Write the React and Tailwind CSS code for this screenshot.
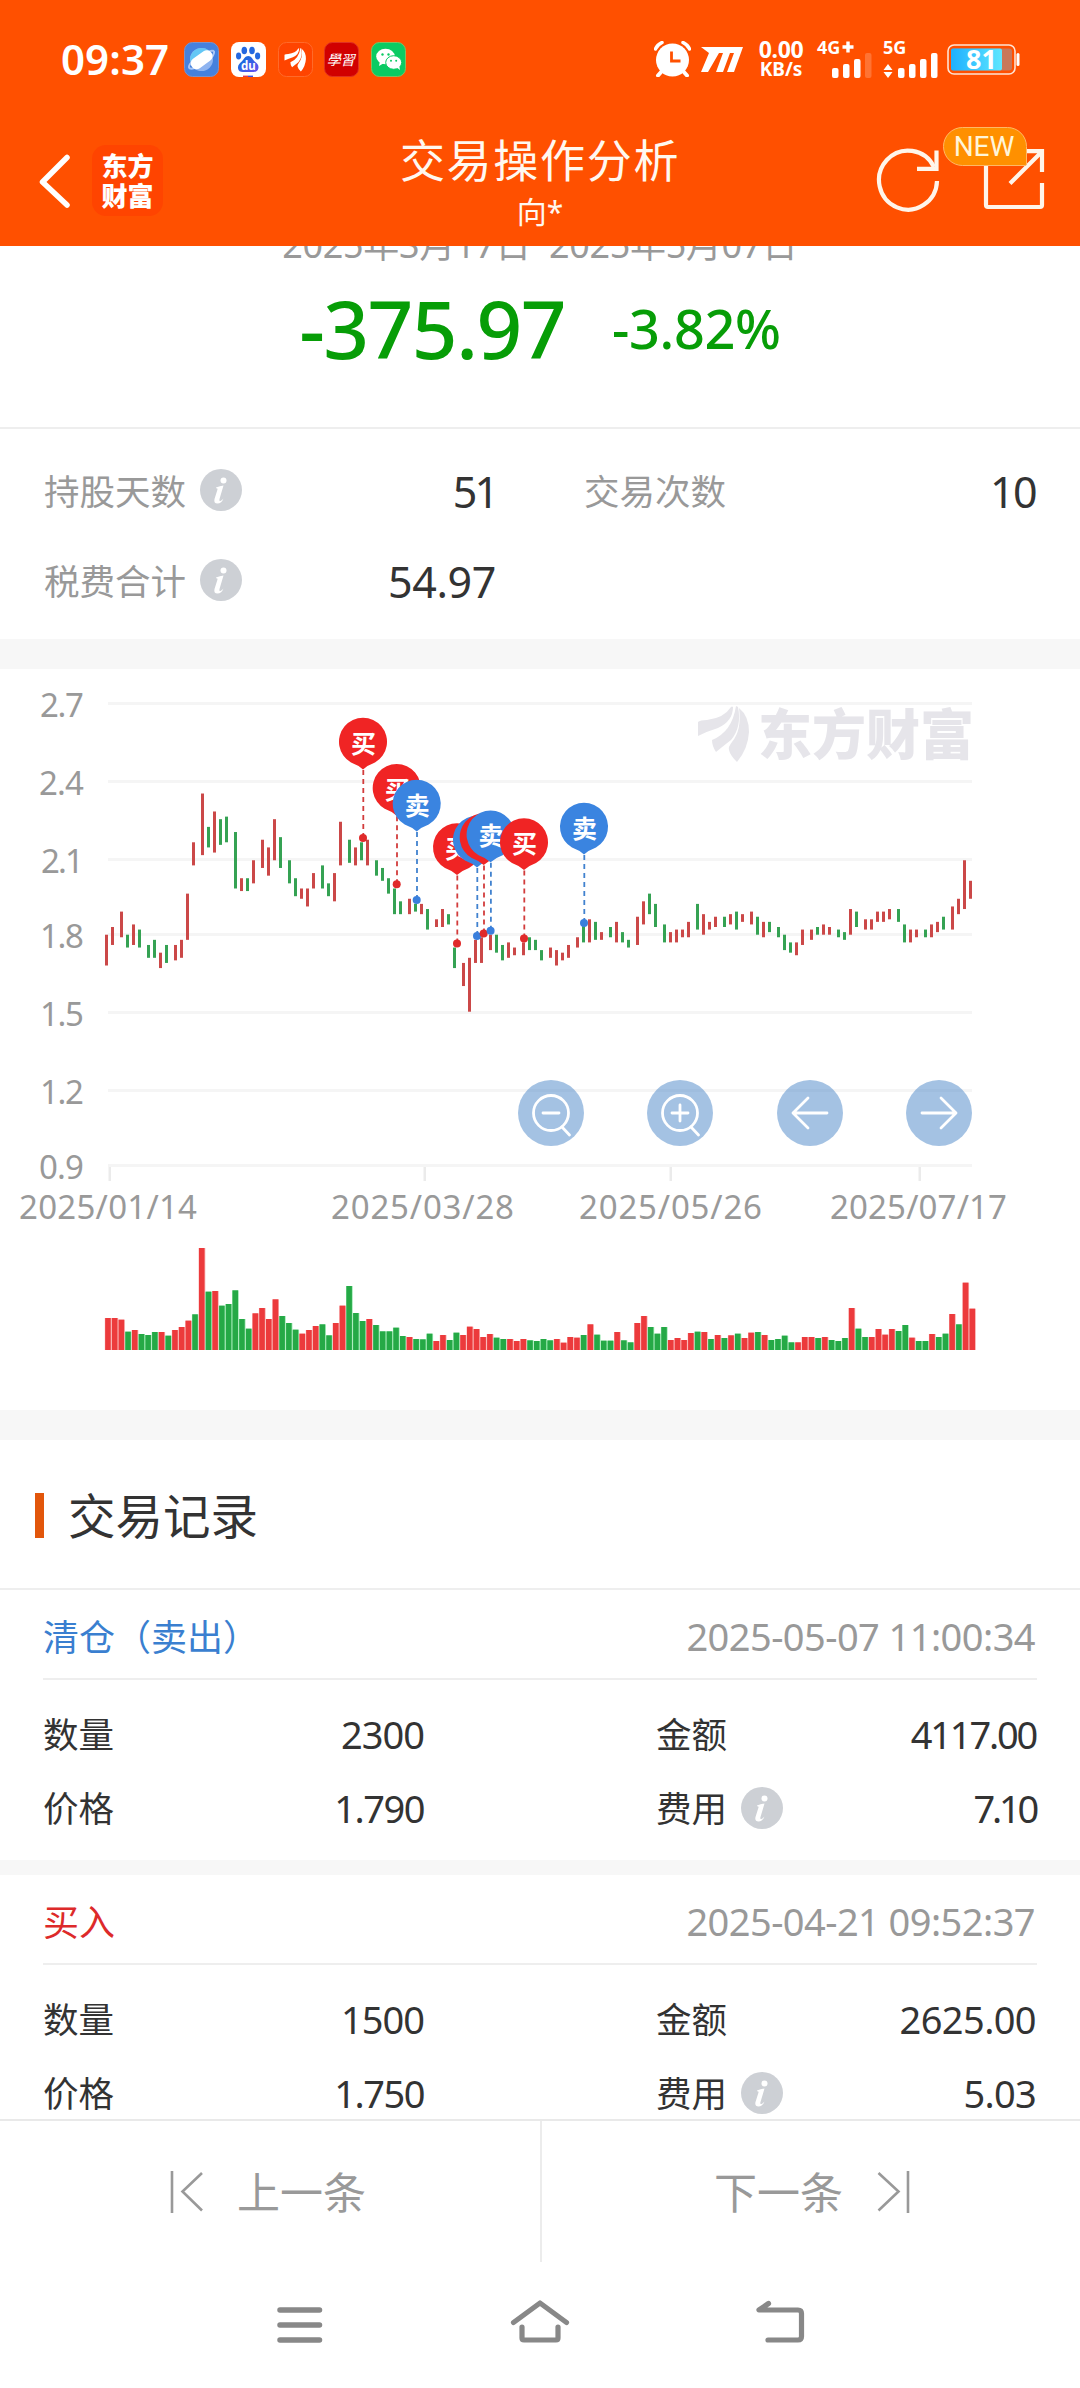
import React from 'react';

// [high, low, up] in cents, one entry per trading day
const candles = [
  [180, 168, 1], [183, 176, 1], [189, 179, 1], [180, 175, 0], [184, 176, 1], [182, 175, 0], [176, 171, 0], [178, 171, 0],
  [173, 167, 1], [176, 169, 0], [176, 170, 1], [178, 171, 1], [196, 178, 1], [216, 207, 1], [235, 211, 1], [222, 214, 0],
  [228, 212, 1], [225, 215, 0], [226, 216, 0], [220, 198, 0], [202, 197, 1], [202, 197, 0], [209, 200, 1], [217, 206, 1],
  [214, 203, 1], [225, 209, 1], [218, 206, 0], [209, 200, 0], [202, 195, 0], [198, 194, 1], [198, 191, 1], [204, 198, 1],
  [207, 198, 0], [200, 195, 0], [204, 193, 1], [224, 207, 1], [217, 208, 0], [214, 207, 1], [216, 209, 0], [217, 207, 1],
  [209, 203, 0], [206, 201, 0], [202, 196, 0], [198, 188, 0], [193, 188, 0], [194, 188, 1], [192, 189, 0], [192, 188, 1],
  [190, 182, 0], [186, 183, 1], [190, 183, 1], [188, 184, 0], [175, 167, 0], [169, 160, 1], [171, 150, 1], [178, 169, 1],
  [179, 169, 1], [180, 174, 1], [180, 173, 0], [176, 170, 0], [177, 171, 1], [175, 172, 1], [177, 172, 1], [179, 174, 0],
  [178, 174, 0], [174, 170, 0], [175, 171, 1], [174, 168, 1], [173, 170, 1], [176, 171, 1], [179, 175, 1], [184, 177, 0],
  [186, 177, 1], [185, 178, 0], [181, 178, 1], [183, 179, 0], [185, 177, 1], [181, 177, 0], [178, 175, 0], [187, 176, 1],
  [193, 184, 1], [196, 188, 0], [192, 183, 0], [184, 177, 0], [181, 177, 1], [182, 177, 1], [182, 179, 1], [185, 179, 1],
  [192, 182, 0], [188, 180, 1], [185, 182, 1], [187, 183, 1], [187, 183, 0], [188, 184, 1], [189, 182, 0], [188, 185, 1],
  [189, 184, 1], [187, 180, 0], [185, 179, 1], [185, 181, 0], [183, 179, 0], [180, 174, 0], [177, 173, 0], [177, 172, 1],
  [182, 176, 1], [182, 178, 1], [183, 180, 0], [184, 180, 1], [183, 180, 1], [182, 179, 0], [181, 178, 0], [190, 180, 1],
  [189, 183, 0], [186, 182, 1], [186, 182, 1], [189, 185, 1], [189, 185, 1], [190, 186, 1], [190, 185, 0], [184, 177, 0],
  [182, 177, 1], [182, 179, 1], [182, 179, 0], [184, 179, 1], [185, 181, 1], [187, 182, 0], [191, 182, 1], [194, 188, 1],
  [209, 190, 1], [201, 194, 1],
];

// bar heights, negative = down day
const volumes = [
  96, 96, 91, -55, 60, -48, -45, -54, 54, -43, 60, 69, 88, -107, 306, -175, 177, -133, -138, -179, -93, -64, 110, 126, 93, 152,
  -102, -81, -61, 49, 60, 72, -77, -44, 81, 133, -192, -111, -87, 93, -75, -56, -56, -67, -42, 39, -33, -32, -49, 27, 45, -30,
  -52, 45, 70, 63, 39, 48, -37, -33, 33, 27, 33, -29, -27, -33, -29, 33, 22, 39, 37, -45, 77, -46, -28, -28, 54, -29, -23, 81,
  102, -69, -49, -69, 30, 36, 30, 51, -55, 54, -33, 45, -36, 44, -49, 36, 52, -54, 45, -30, -33, -43, -23, 23, 39, 39, -36, 39,
  -30, -27, -36, 126, -64, -39, 39, 63, 46, 63, -57, -75, 37, -27, -27, 48, -39, -49, 108, -77, 202, 124,
];

const trades = [
  { x: 363, y: 838, side: '买' },
  { x: 396.7, y: 884.3, side: '买' },
  { x: 416.7, y: 900, side: '卖' },
  { x: 457, y: 943.5, side: '买' },
  { x: 477, y: 936, side: '卖' },
  { x: 483.7, y: 933.5, side: '买' },
  { x: 490.6, y: 930.7, side: '卖' },
  { x: 524, y: 938.5, side: '买' },
  { x: 584, y: 923, side: '卖' },
];

const priceLabels = [
  ['2.7', 703.5, 43], ['2.4', 781.5, 44], ['2.1', 859.5, 42], ['1.8', 934.5, 43],
  ['1.5', 1012.5, 43], ['1.2', 1090.5, 43], ['0.9', 1165.5, 44],
];

const dateLabels = [
  ['2025/01/14', 109.5, 20, 176],
  ['2025/03/28', 424.5, 332, 181],
  ['2025/05/26', 670.5, 580, 181],
  ['2025/07/17', 919.5, 831, 175],
];

const records = [
  { type: '清仓（卖出）', color: 'text-[#3a7fd0]', time: '2025-05-07 11:00:34', count: '2300', amount: '4117.00', amountClass: 'tracking-[-2.2px]', price: '1.790', fee: '7.10', feeClass: 'tracking-[-3.2px]' },
  { type: '买入', color: 'text-[#dd2a2a]', time: '2025-04-21 09:52:37', count: '1500', amount: '2625.00', amountClass: 'tracking-[-0.6px]', price: '1.750', fee: '5.03', feeClass: 'tracking-[-0.7px]' },
];

const AppIcons = () => (
  <div className="flex gap-[11.8px]">
    <svg className="w-[35px] h-[35px]" viewBox="0 0 35 35">
      <rect x=".5" y=".5" width="34" height="34" rx="8" fill="#4581dd" stroke="#7b93c9" />
      <circle cx="17.5" cy="17.5" r="11.5" fill="#8fb4f0" />
      <path d="M6 17.5A11.5 11.5 0 0 1 27 11L8 23Z" fill="#64c7f5" />
      <path d="M5 26q-1-3 5-8M30 9q-3-1-6 1M30 9q1 4-6 10M5 26q4 2 9-2" stroke="#a8c6f5" strokeWidth="2" fill="none" />
      <rect x="5.5" y="12" width="24" height="11.5" rx="5.5" fill="#fff" transform="rotate(-36 17.5 17.5)" />
    </svg>
    <svg className="w-[35px] h-[35px]" viewBox="0 0 35 35">
      <defs>
        <linearGradient id="paw" x1="0" y1="0" x2="1" y2="1">
          <stop offset=".3" stopColor="#1f69e0" />
          <stop offset="1" stopColor="#6b4df0" />
        </linearGradient>
      </defs>
      <rect width="35" height="35" rx="8" fill="#fff" />
      <g fill="#2468e0">
        <ellipse cx="13.3" cy="8.5" rx="2.8" ry="3.8" />
        <ellipse cx="21" cy="8.5" rx="2.8" ry="3.8" />
        <ellipse cx="7.6" cy="14" rx="2.6" ry="3.4" />
        <ellipse cx="26.6" cy="14" rx="2.6" ry="3.4" />
      </g>
      <path d="M17.2 14c3.3 0 4 3 6.2 5.2 2.3 2.2 4.6 3.3 4 7-.5 3-2.8 3.8-5.2 3.7H12c-2.7 0-4.7-.9-5-3.7-.4-3.5 2-5 4-7 2.2-2.2 3-5.2 6.2-5.2Z" fill="url(#paw)" />
      <text x="17.3" y="28" fontSize="11.5" fontWeight="700" fill="#fff" textAnchor="middle" className="font-['Noto_Sans',sans-serif]">du</text>
      <rect x="12" y="33.6" width="5" height="1.4" fill="#e23a4a" />
      <rect x="17" y="33.6" width="5" height="1.4" fill="#3a50e0" />
    </svg>
    <svg className="w-[35px] h-[35px]" viewBox="0 0 35 35">
      <rect x=".5" y=".5" width="34" height="34" rx="8" fill="#ff4400" stroke="#ff6a2a" />
      <g transform="translate(6.5 6) scale(.42)" fill="#fff">
        <EastPath />
      </g>
    </svg>
    <svg className="w-[35px] h-[35px]" viewBox="0 0 35 35">
      <rect x=".5" y=".5" width="34" height="34" rx="8" fill="#d10000" stroke="#e03020" />
      <text x="17.5" y="23" fontSize="14" fill="#fff" textAnchor="middle" transform="skewX(-14) translate(5 0)" className="font-['Noto_Sans_CJK_TC',sans-serif]">學習</text>
    </svg>
    <svg className="w-[35px] h-[35px]" viewBox="0 0 35 35">
      <rect x=".5" y=".5" width="34" height="34" rx="8" fill="#0acb63" stroke="#7fc060" />
      <ellipse cx="14.5" cy="14.5" rx="9.3" ry="7.8" fill="#fff" />
      <path d="M9 19l-1 5 5-3z" fill="#fff" />
      <ellipse cx="22.7" cy="20.5" rx="8" ry="6.8" fill="#fff" stroke="#0acb63" strokeWidth="1" />
      <path d="M25 25l4 3-1-5z" fill="#fff" />
      <g fill="#0acb63">
        <circle cx="11.5" cy="12.5" r="1.2" />
        <circle cx="17.5" cy="12.5" r="1.2" />
        <circle cx="20" cy="18.7" r="1" />
        <circle cx="25.2" cy="18.7" r="1" />
      </g>
    </svg>
  </div>
);

// three feathers of the brand mark, 51x56
const EastPath = () => (
  <>
    <path d="M0 30V16q2-2 9-2Q26 12 33 1q1-1 2 0 0 14-15 21Q10 25 0 30Z" />
    <path d="M14 34Q34 26 38 0l2 1q4 20-7 33-9 7-15 12-4-6-4-12Z" />
    <path d="M31 44q-1-3 3-8Q44 24 41 2q10 8 10 24-1 17-12 30-7-7-8-12Z" />
  </>
);

const SignalBars = ({ weak }) => (
  <svg className="w-[41px] h-[26px]" viewBox="0 0 41 26" fill="#fff">
    <rect x="0" y="16" width="6.5" height="10" rx="2" />
    <rect x="11" y="12" width="6.5" height="14" rx="2" />
    <rect x="22" y="7" width="6.5" height="19" rx="2" />
    <rect x="33" y="1" width="6.5" height="25" rx="2" opacity={weak ? 0.2 : 1} />
  </svg>
);

const StatusBar = () => (
  <div className="h-[118px] pl-[61px] pr-[60px] flex items-center justify-between text-white">
    <div className="flex items-center gap-[14px]">
      <span className="w-[109px] text-[42px] font-semibold leading-none whitespace-nowrap tracking-[0.1px]">09:37</span>
      <AppIcons />
    </div>
    <div className="flex items-center">
      <svg className="w-[37px] h-[36px]" viewBox="0 0 37 36">
        <path d="M1.5 8Q3 4 8 1.500M35.5 8Q34 4 29 1.500" stroke="#fff" strokeWidth="3.5" fill="none" strokeLinecap="round" />
        <path d="M8 30l-4 4.500M29 30l4 4.500" stroke="#fff" strokeWidth="4" strokeLinecap="round" />
        <circle cx="18.5" cy="19" r="16.5" fill="#fff" />
        <path d="M17.5 10.500v9.500h9" stroke="#ff5000" strokeWidth="2.8" fill="none" />
      </svg>
      <svg className="w-[42px] h-[25px] ml-[10px]" viewBox="0 0 42 25" fill="#fff">
        <path d="M0 0h42l-9 25h-7l7-19h-4l-7 19h-7l7-19h-4L7 25H0L8 6Z" />
      </svg>
      <div className="ml-[13px] mt-[-3px] w-[50px] flex flex-col items-center font-bold leading-none">
        <span className="text-[23px] h-[21px] leading-[20px] tracking-[-0.4px]">0.00</span>
        <span className="text-[19px] h-[17px] leading-[18px]">KB/s</span>
      </div>
      <div className="relative ml-[11px] w-[56px] h-[37px] flex items-end justify-end">
        <span className="absolute left-0 top-[-3px] text-[18px] font-bold leading-none whitespace-nowrap">4G</span>
        <svg className="absolute left-[25px] top-0 w-[12px] h-[12px]" viewBox="0 0 12 12">
          <path d="M6 0.500v11M0.500 6h11" stroke="#fff" strokeWidth="3.4" />
        </svg>
        <SignalBars weak />
      </div>
      <div className="relative ml-[10px] w-[56px] h-[37px] flex items-end justify-end">
        <span className="absolute left-0 top-[-3px] text-[18px] font-bold leading-none">5G</span>
        <svg className="absolute left-0 bottom-0 w-[10px] h-[14px]" viewBox="0 0 10 14" fill="#fff">
          <path d="M5 0l4.500 6h-9zM5 14l4.500-6h-9z" />
        </svg>
        <SignalBars />
      </div>
      <svg className="ml-[8px] w-[73px] h-[31px] overflow-visible" viewBox="0 0 73 31">
        <defs>
          <linearGradient id="power">
            <stop offset="0" stopColor="#1fb0ff" />
            <stop offset="1" stopColor="#5ee6ff" />
          </linearGradient>
        </defs>
        <rect x="1" y="1" width="67" height="29" rx="6" fill="none" stroke="#ffe3d3" strokeWidth="1.6" />
        <rect x="4" y="4.5" width="61" height="22" rx="3" fill="#c9785a" />
        <rect x="4" y="4.5" width="51" height="22" rx="2" fill="url(#power)" />
        <rect x="69.5" y="9" width="3" height="13" rx="1.5" fill="#fff" />
        <text x="34.5" y="25" fontSize="27" fontWeight="700" fill="#fff" textAnchor="middle" className="font-['Noto_Sans',sans-serif]">81</text>
      </svg>
    </div>
  </div>
);

const TitleBar = () => (
  <div className="relative h-[128px] flex justify-between">
    <div className="flex items-center pl-[36px] pb-[3px]">
      <svg className="w-[36px] h-[54px]" viewBox="0 0 36 54">
        <path d="M31 3.500L6.500 28l24.500 23" stroke="#fff" strokeWidth="5.5" fill="none" strokeLinecap="round" strokeLinejoin="round" />
      </svg>
      <div className="ml-[20px] w-[71px] h-[71px] rounded-[14px] bg-[#ff4400] flex flex-col items-center justify-center text-white font-black text-[26px] leading-[30px]">
        <span>东方</span>
        <span>财富</span>
      </div>
    </div>
    <div className="absolute inset-x-0 top-[14px] flex flex-col items-center text-[#fff8f0]">
      <span className="text-[45px] leading-[58px] tracking-[1.7px]">交易操作分析</span>
      <span className="text-[30px] leading-[44px]">向*</span>
    </div>
    <div className="relative flex items-center pr-[34px] pb-[5px]">
      <svg className="w-[66px] h-[66px]" viewBox="876 147 66 66" fill="none" stroke="#fff5ea" strokeWidth="4.2">
        <path d="M938 181A29 29.500 0 1 1 935 167" />
        <path d="M918 168.800h19.500V150.500" />
      </svg>
      <svg className="ml-[42px] w-[63px] h-[63px]" viewBox="984 149 63 63" fill="none" stroke="#fff5ea" strokeWidth="4.2">
        <path d="M1011 152h-24v54q0 2 2 2h52q2 0 2-2v-22" />
        <path d="M1020 152.200h23V173M1043 152.500l-32 32" />
      </svg>
      <span className="absolute right-[53px] top-[9px] w-[84px] h-[39px] rounded-[20px] rounded-br-[2px] border border-[#ffb866] bg-[#ff9000] text-[#fff5d8] text-[28px] leading-[38px] text-center pr-[2px] font-['Roboto',sans-serif]">NEW</span>
    </div>
  </div>
);

const InfoIcon = () => (
  <svg className="w-[42px] h-[42px] ml-[14px]" viewBox="0 0 42 42">
    <circle cx="21" cy="21" r="21" fill="#cdd0d5" />
    <circle cx="23.5" cy="11.5" r="3" fill="#fff" />
    <path d="M16 18.500q4-1.500 7.500-2l-4 13.500q-.8 2.500 1 2 1.500-.6 3-2.500-2 5-6 5-4 0-3-4.500l3-9.500q.3-1.500-1.500-1.200z" fill="#fff" />
  </svg>
);

const Stat = ({ label, value, info, className, valueClass }) => (
  <div className={`flex items-center h-[90px] ${className}`}>
    <span className="pt-[4px] text-[35.5px] leading-none text-[#999]">{label}</span>
    {info && <InfoIcon />}
    <span className={`ml-auto pt-[2px] text-[43px] leading-none text-[#333] ${valueClass}`}>{value}</span>
  </div>
);

const Pin = ({ x, y, side }) => {
  const color = side === '买' ? '#f02424' : '#3a84e0';
  const line = side === '买' ? '#d23c3c' : '#4182cf';
  const cy = y - 95;
  return (
    <g>
      <line x1={x + 0.3} y1={cy + 27} x2={x + 0.3} y2={y} stroke={line} strokeWidth="1.8" strokeDasharray="5 4" />
      <circle cx={x} cy={y} r="4" fill={side === '买' ? '#e02a2a' : '#3a7fdc'} />
      <path d={`M${x} ${cy + 26.5}Q${x - 5} ${cy + 22} ${x - 12} ${cy + 19.5}A24 24 0 1 1 ${x + 12} ${cy + 19.5}Q${x + 5} ${cy + 22} ${x} ${cy + 26.5}Z`} fill={color} />
      <text x={x + 0.5} y={cy + 9.5} fontSize="25" fontWeight="700" fill="#fff" textAnchor="middle">{side}</text>
    </g>
  );
};

const RoundButton = ({ x, children }) => (
  <g transform={`translate(${x} 1113)`} fill="none" stroke="#fff" strokeWidth="2.8" strokeLinecap="round" strokeLinejoin="round">
    <circle r="33" fill="#4985c8" fillOpacity=".5" stroke="none" />
    {children}
  </g>
);

const Chart = () => (
  <svg className="block w-[1080px] h-[741px] font-['Noto_Sans','Noto_Sans_CJK_SC',sans-serif]" viewBox="0 669 1080 741">
    {priceLabels.map(([label, y, w]) => (
      <g key={label}>
        <rect x="108" y={y - 1.5} width="864" height="3" fill="#f5f5f5" />
        <text x={83 - w} y={y + 13} fontSize="33" fill="#999" textLength={w + 1}>{label}</text>
      </g>
    ))}
    {dateLabels.map(([label, tick, x, w]) => (
      <g key={label}>
        <rect x={tick - 1} y="1167" width="2.5" height="14" fill="#ebebeb" />
        <text x={x - 1} y="1218.5" fontSize="33" fill="#999" textLength={w + 2}>{label}</text>
      </g>
    ))}

    <g fill="#e6e5ea">
      <g transform="translate(698 706)"><EastPath /></g>
      <text x="758" y="754.5" fontSize="54" fontWeight="900" textLength="216">东方财富</text>
    </g>

    {candles.map(([high, low, up], i) => (
      <rect
        key={i}
        x={105 + 3 * Math.ceil(i * 2.2326 - 0.24)}
        y={934.7 + (180 - high) * 2.567}
        width="3"
        height={(high - low) * 2.567}
        fill={up ? '#cb4848' : '#35a253'}
      />
    ))}
    {volumes.map((v, i) => (
      <g key={i}>
        <rect x={104.8 + i * 6.7} y={1350 - Math.abs(v) / 3} width="6.7" height={Math.abs(v) / 3} fill={v > 0 ? '#f9a9a9' : '#9be8b0'} />
        <rect x={105.2 + i * 6.7} y={1350 - Math.abs(v) / 3} width="5.5" height={Math.abs(v) / 3} fill={v > 0 ? '#ec3a3c' : '#25a946'} />
      </g>
    ))}

    {trades.map((t) => <Pin key={t.x} {...t} />)}

    <RoundButton x={551}>
      <circle r="17.5" />
      <path d="M-8 0H8M11 14l7.500 8" />
    </RoundButton>
    <RoundButton x={680}>
      <circle r="17.5" />
      <path d="M-8 0H8M0-8V8M11 14l7.500 8" />
    </RoundButton>
    <RoundButton x={810}>
      <path d="M17 0h-34M-2-15L-17 0-2 15" />
    </RoundButton>
    <RoundButton x={939}>
      <path d="M-17 0h34M2-15L17 0 2 15" />
    </RoundButton>
  </svg>
);

const Field = ({ label, value, info, className, valueClass = 'tracking-[-1px]' }) => (
  <div className={`flex items-center ${className}`}>
    <span className="pt-[2px] text-[35.5px] leading-none">{label}</span>
    {info && <InfoIcon />}
    <span className={`ml-auto pr-[1px] text-[38px] leading-none ${valueClass}`}>{value}</span>
  </div>
);

const Record = ({ item }) => (
  <div className="h-[285px] px-[43px] border-b-[15px] border-[#f7f7f7] text-[#333]">
    <div className="h-[90px] pt-[3px] flex items-center justify-between border-b-2 border-[#eee]">
      <span className={`pt-[4px] text-[36px] leading-none ${item.color}`}>{item.type}</span>
      <span className="pr-[2px] text-[38px] leading-none text-[#999] tracking-[-0.55px]">{item.time}</span>
    </div>
    <div className="pt-[17px]">
      <div className="flex justify-between h-[74px]">
        <Field label="数量" value={item.count} className="w-[382px]" />
        <Field label="金额" value={item.amount} valueClass={item.amountClass} className="w-[381px]" />
      </div>
      <div className="flex justify-between h-[74px]">
        <Field label="价格" value={item.price} className="w-[382px]" valueClass="tracking-[-1.5px]" />
        <Field label="费用" value={item.fee} info valueClass={item.feeClass} className="w-[381px]" />
      </div>
    </div>
  </div>
);

const Footer = () => (
  <footer className="h-[269px] bg-white border-t-2 border-[#e9e9e9]">
    <div className="h-[141px] flex text-[#999] text-[43px]">
      <div className="w-[542px] h-[141px] border-r-2 border-[#ececec] flex items-center pl-[170px]">
        <svg className="w-[34px] h-[42px]" viewBox="0 0 34 42" fill="none" stroke="#999" strokeWidth="2.6">
          <path d="M2 0v42M32 2L12.500 20.500 32 39.500" />
        </svg>
        <span className="ml-[33px] pt-[2px] leading-none">上一条</span>
      </div>
      <div className="flex-1 flex items-center pl-[172px]">
        <span className="pt-[2px] leading-none">下一条</span>
        <svg className="ml-[34px] w-[34px] h-[42px]" viewBox="0 0 34 42" fill="none" stroke="#999" strokeWidth="2.6">
          <path d="M31 0v42M1.500 2L21.500 20.500 1.500 39.500" />
        </svg>
      </div>
    </div>
    <div className="h-[124px] pl-[276px] flex pt-[35px]">
      <svg className="w-[48px] h-[50px]" viewBox="276 2297 48 50" stroke="#888" strokeWidth="5.5" strokeLinecap="round">
        <path d="M280 2310h39.500M280 2325h39.500M280 2340h39.500" />
      </svg>
      <svg className="ml-[184px] w-[64px] h-[50px]" viewBox="508 2297 64 50" fill="none" stroke="#888" strokeWidth="5.2" strokeLinecap="round" strokeLinejoin="round">
        <path d="M513.500 2322.500L540 2303l26.500 19.500M522 2327v11q0 2 2 2h32q2 0 2-2v-11" />
      </svg>
      <svg className="ml-[180px] w-[58px] h-[50px]" viewBox="752 2297 58 50" fill="none" stroke="#888" strokeWidth="5.2" strokeLinecap="round" strokeLinejoin="round">
        <path d="M768.500 2303.500l-9.500 6.500h39q3.500 0 3.500 3.500v23q0 3.500-3.500 3.500h-30" />
      </svg>
    </div>
  </footer>
);

const App = () => {
  return (
    <div className="w-[1080px] h-[2388px] overflow-hidden flex flex-col bg-white font-['Noto_Sans','Noto_Sans_CJK_SC',sans-serif]">
      <header className="h-[246px] shrink-0 bg-[#ff5000]">
        <StatusBar />
        <TitleBar />
      </header>

      <main className="h-[1873px] shrink-0 overflow-hidden">
        <section className="h-[183px] border-b-2 border-[#eee] flex flex-col items-center">
          <p className="-mt-[21px] h-[40px] shrink-0 text-[36px] leading-[40px] text-[#999] tracking-[-0.35px] whitespace-pre">2025年3月17日  2025年5月07日</p>
          <div className="h-[126px] flex items-center gap-[47px] font-medium text-[#079d07]">
            <span className="text-[80px] leading-none tracking-[-1.5px]">-375.97</span>
            <span className="text-[54px] leading-none tracking-[-0.3px]">-3.82%</span>
          </div>
        </section>

        <section className="h-[210px] pt-[16px] px-[44px]">
          <div className="flex justify-between">
            <Stat label="持股天数" value="51" info className="w-[452px]" valueClass="tracking-[-3px]" />
            <Stat label="交易次数" value="10" className="w-[452px]" valueClass="tracking-[-1.6px]" />
          </div>
          <Stat label="税费合计" value="54.97" info className="w-[452px]" valueClass="tracking-[-0.4px]" />
        </section>

        <div className="h-[30px] bg-[#f7f7f7]" />
        <Chart />
        <div className="h-[30px] bg-[#f7f7f7]" />

        <section>
          <div className="h-[150px] pl-[35px] pt-[3px] flex items-center border-b-2 border-[#eee]">
            <span className="w-[9px] h-[45px] bg-[#e2560b]" />
            <h2 className="ml-[24px] text-[47.5px] leading-none text-[#333]">交易记录</h2>
          </div>
          {records.map((item) => <Record key={item.time} item={item} />)}
        </section>
      </main>

      <Footer />
    </div>
  );
};

export default App;
